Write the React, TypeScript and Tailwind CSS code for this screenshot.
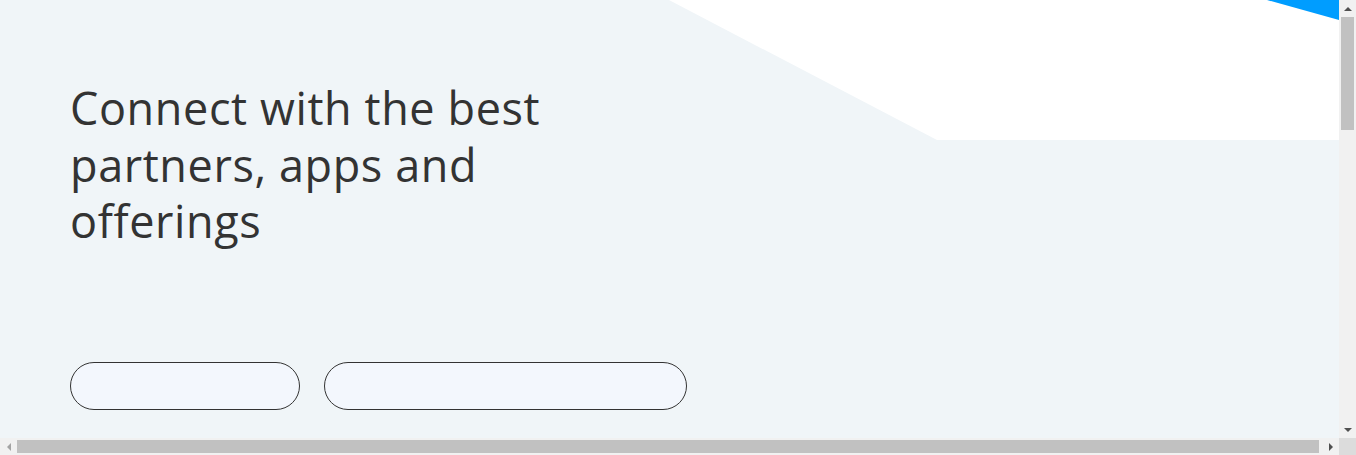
import React from "react";

function HeroShapes() {
  return (
    <svg
      className="absolute inset-0 h-[440px] w-full"
      viewBox="0 0 1339 440"
      preserveAspectRatio="none"
      aria-hidden="true"
    >
      <polygon points="669,0 937,140 1339,140 1339,0" fill="#ffffff" />
      <polygon points="1267,0 1339,0 1339,20" fill="#009dff" />
    </svg>
  );
}

function Arrow({ dir }: { dir: "up" | "down" | "left" | "right" }) {
  const pts = {
    up: "0,7 8,7 4,3",
    down: "0,3 8,3 4,7",
    left: "6,1 6,9 2,5",
    right: "2,1 2,9 6,5",
  }[dir];
  return (
    <svg width="8" height="10" viewBox="0 0 8 10" aria-hidden="true">
      <polygon points={pts} fill={dir === "left" ? "#a3a3a3" : "#505050"} />
    </svg>
  );
}

export default function App() {
  return (
    <div
      className="flex h-[455px] w-[1356px] flex-col overflow-hidden bg-[#f1f1f1]"
      style={{ fontFamily: "'Open Sans', 'Noto Sans', Arial, sans-serif" }}
    >
      <div className="flex min-h-0 flex-1">
        {/* Page viewport */}
        <main className="min-w-0 flex-1 overflow-hidden bg-[#f0f5f8]">
          <section className="relative h-[440px]">
            <HeroShapes />
            <div className="relative flex flex-col pl-[70px] pt-[80px]">
              <h1 className="max-w-[560px] text-[45px] leading-[56.5px] tracking-[0.6px] font-normal text-[#333333]">
                Connect with the best partners, apps and offerings
              </h1>

              {/* Actions */}
              <div className="mt-[112px] flex gap-6">
                <button className="h-12 w-[230px] rounded-full border border-[#333333] bg-[#f3f7fd]" />
                <button className="h-12 w-[363px] rounded-full border border-[#333333] bg-[#f3f7fd]" />
              </div>
            </div>
          </section>
        </main>

        {/* Vertical scrollbar */}
        <div className="flex w-[17px] flex-col bg-[#f1f1f1]">
          <div className="flex h-[17px] items-center justify-center">
            <Arrow dir="up" />
          </div>
          <div className="flex-1 px-[2px]">
            <div className="h-[113px] bg-[#c1c1c1]" />
          </div>
          <div className="flex h-[17px] items-center justify-center">
            <Arrow dir="down" />
          </div>
        </div>
      </div>

      {/* Horizontal scrollbar */}
      <div className="flex h-[17px] bg-[#f1f1f1]">
        <div className="flex w-[17px] items-center justify-center">
          <Arrow dir="left" />
        </div>
        <div className="flex-1 py-[2px] pr-[3px]">
          <div className="h-full bg-[#c1c1c1]" />
        </div>
        <div className="flex w-[17px] items-center justify-center">
          <Arrow dir="right" />
        </div>
        <div className="w-[17px] bg-[#dcdcdc]" />
      </div>
    </div>
  );
}
